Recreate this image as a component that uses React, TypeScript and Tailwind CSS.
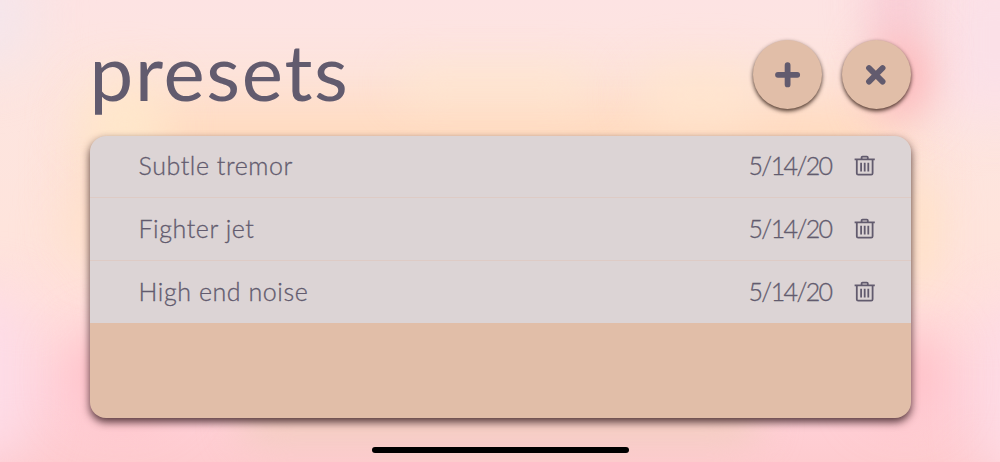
import React, { useState } from "react";

interface Preset {
  id: number;
  name: string;
  date: string;
}

const PRESETS: Preset[] = [
  { id: 1, name: "Subtle tremor", date: "5/14/20" },
  { id: 2, name: "Fighter jet", date: "5/14/20" },
  { id: 3, name: "High end noise", date: "5/14/20" },
];

// soft colour blobs behind everything
const BLOBS = [
  "left-[90px] top-[100px] w-[810px] h-[150px] bg-[#ffdabd] blur-[30px]",
  "left-[85px] top-[80px] w-[80px] h-[90px] bg-[#ffe9cc] blur-[26px]",
  "left-[400px] top-[72px] w-[190px] h-[24px] bg-[#ffe8cd] blur-[22px]",
  "left-[640px] top-[70px] w-[120px] h-[50px] bg-[#ffe6cf] blur-[24px]",
  "left-[65px] top-[190px] w-[60px] h-[80px] bg-[#ffe1cc] blur-[24px]",
  "left-[895px] top-[180px] w-[44px] h-[110px] bg-[#ffe2c8] blur-[20px]",
  "left-[-60px] top-[-40px] w-[90px] h-[110px] bg-[#f3e6ec] blur-[28px]",
  "left-[935px] top-[-40px] w-[120px] h-[160px] bg-[#fbe0e7] blur-[26px]",
  "left-[870px] top-[-40px] w-[56px] h-[90px] bg-[#f8cbd5] blur-[22px]",
  "left-[870px] top-[35px] w-[60px] h-[84px] bg-[#fcb6ba] blur-[20px]",
  "left-[-60px] top-[290px] w-[90px] h-[170px] bg-[#fddce7] blur-[26px]",
  "left-[980px] top-[300px] w-[80px] h-[180px] bg-[#fddbe5] blur-[26px]",
  "left-[72px] top-[335px] w-[100px] h-[80px] bg-[#ffbcc3] blur-[26px]",
  "left-[870px] top-[335px] w-[70px] h-[80px] bg-[#ffbcc3] blur-[26px]",
  "left-[240px] top-[400px] w-[520px] h-[40px] bg-[#f0cdbc] blur-[20px]",
];

const Background = () => (
  <div className="absolute inset-0 bg-[linear-gradient(#fde3e3,#fde5e0_15%,#fee4dc_50%,#ffe0dc_65%,#ffd2da_85%,#fecbcf)]">
    {BLOBS.map((blob) => (
      <div key={blob} className={`absolute rounded-[40px] ${blob}`} />
    ))}
  </div>
);

const PlusIcon = () => (
  <svg width="26" height="26" viewBox="0 0 26 26" stroke="currentColor" strokeWidth="5.8" strokeLinecap="round">
    <path d="M12.6 3.2v19.2M3 12.8h19.2" />
  </svg>
);

const CloseIcon = () => (
  <svg width="26" height="26" viewBox="0 0 26 26" stroke="currentColor" strokeWidth="5.8" strokeLinecap="round">
    <path d="M6 6l13.6 13.6M19.6 6L6 19.6" />
  </svg>
);

const TrashIcon = () => (
  <svg width="22" height="22" viewBox="0 0 22 22" fill="none" stroke="currentColor" strokeWidth="1.8">
    <path d="M.6 4.4h20.2" />
    <path d="M7.6 4V2.6q0-.9.9-.9h4.4q.9 0 .9.9V4" />
    <path d="M2.8 4.6v13.6q0 1.4 1.4 1.4h13q1.4 0 1.4-1.4V4.6" />
    <path d="M7.1 7.8v8.6M10.7 7.8v8.6M14.3 7.8v8.6" />
  </svg>
);

const RoundButton = ({
  label,
  onClick,
  children,
}: {
  label: string;
  onClick?: () => void;
  children: React.ReactNode;
}) => (
  <button
    aria-label={label}
    onClick={onClick}
    className="flex size-[69px] items-center justify-center rounded-full bg-[#e1bea8] shadow-[0_2px_4px_rgba(40,20,10,0.85)]"
  >
    {children}
  </button>
);

const App = () => {
  const [presets, setPresets] = useState(PRESETS);

  const removePreset = (id: number) => {
    setPresets(presets.filter((p) => p.id !== id));
  };

  return (
    <div className="relative h-[462px] w-full overflow-hidden font-[Lato,sans-serif] text-[#625b6e]">
      <Background />

      <div className="relative flex h-full flex-col px-[89.5px] pt-10">
        <header className="flex h-[95.5px] shrink-0 items-start justify-between">
          <h1 className="text-[78px] leading-[62px] tracking-[1.7px]">presets</h1>
          <div className="flex gap-[19.5px]">
            <RoundButton label="Add preset">
              <PlusIcon />
            </RoundButton>
            <RoundButton label="Close">
              <CloseIcon />
            </RoundButton>
          </div>
        </header>

        <main className="h-[282.5px] shrink-0 overflow-hidden rounded-2xl bg-[#e1bea8] shadow-[0_4px_8px_rgba(40,15,20,0.8)]">
          <ul>
            {presets.map((preset) => (
              <li
                key={preset.id}
                className="flex h-[62.6px] items-center border-b border-[#decbc5] bg-[#dcd4d5] pr-[35px] pl-[49px] text-[25px] font-light [-webkit-text-stroke:0.3px] last:border-b-0"
              >
                <span className="flex-1 pb-px tracking-[0.57px]">{preset.name}</span>
                <span className="mr-[22px] pb-px tracking-[-1.6px]">{preset.date}</span>
                <button aria-label="Delete preset" onClick={() => removePreset(preset.id)}>
                  <TrashIcon />
                </button>
              </li>
            ))}
          </ul>
        </main>

        <div className="mt-[29px] h-[6px] w-[257px] shrink-0 self-center rounded-full bg-black" />
      </div>
    </div>
  );
};

export default App;
